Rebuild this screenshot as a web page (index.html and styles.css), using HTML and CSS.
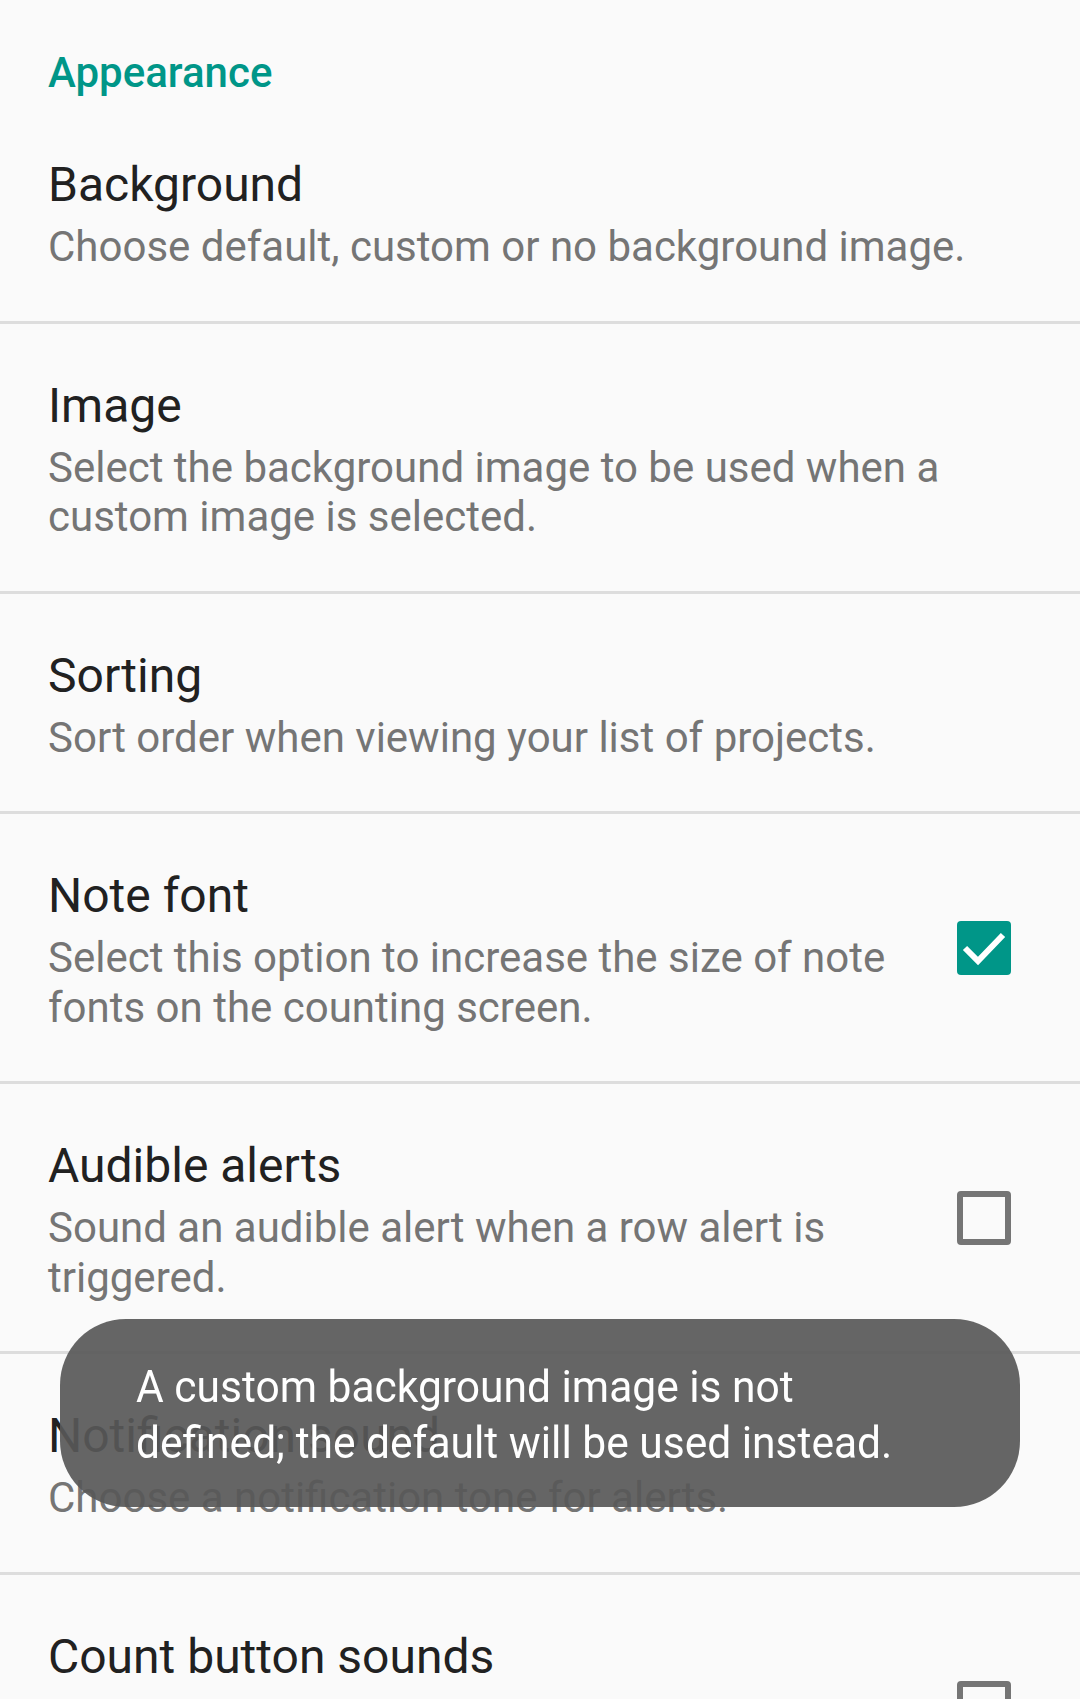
FILE: index.html
```html
<!DOCTYPE html>
<html lang="en">
<head>
<meta charset="utf-8">
<title>Settings</title>
<link rel="stylesheet" href="styles.css">
</head>
<body>
<main class="prefs">
  <div class="category">Appearance</div>

  <div class="pref">
    <div class="pref-text">
      <div class="pref-title">Background</div>
      <div class="pref-summary">Choose default, custom or no background image.</div>
    </div>
  </div>

  <div class="pref">
    <div class="pref-text">
      <div class="pref-title">Image</div>
      <div class="pref-summary">Select the background image to be used when a custom image is selected.</div>
    </div>
  </div>

  <div class="pref">
    <div class="pref-text">
      <div class="pref-title">Sorting</div>
      <div class="pref-summary">Sort order when viewing your list of projects.</div>
    </div>
  </div>

  <div class="pref">
    <div class="pref-text">
      <div class="pref-title">Note font</div>
      <div class="pref-summary">Select this option to increase the size of note fonts on the counting screen.</div>
    </div>
    <div class="pref-widget">
      <span class="checkbox checked">
        <svg viewBox="0 0 54 54" width="54" height="54"><polyline points="8,27 21,40 46,14" fill="none" stroke="#ffffff" stroke-width="6"/></svg>
      </span>
    </div>
  </div>

  <div class="pref">
    <div class="pref-text">
      <div class="pref-title">Audible alerts</div>
      <div class="pref-summary">Sound an audible alert when a row alert is triggered.</div>
    </div>
    <div class="pref-widget"><span class="checkbox"></span></div>
  </div>

  <div class="pref">
    <div class="pref-text">
      <div class="pref-title">Notification sound</div>
      <div class="pref-summary">Choose a notification tone for alerts.</div>
    </div>
  </div>

  <div class="pref">
    <div class="pref-text">
      <div class="pref-title">Count button sounds</div>
      <div class="pref-summary">Play a sound when the increase or decrease count buttons are pressed.</div>
    </div>
    <div class="pref-widget"><span class="checkbox"></span></div>
  </div>
</main>

<div class="toast">
  <p class="toast-text">A custom background image is not<br>defined; the default will be used instead.</p>
</div>
</body>
</html>
```

FILE: styles.css
```css
html, body {
  margin: 0;
  padding: 0;
  background: #fafafa;
}

body {
  font-family: Roboto, "Noto Sans", sans-serif;
  overflow: hidden;
}

.prefs {
  display: flex;
  flex-direction: column;
}

.category {
  padding: 48px 48px 6px;
  font-size: 42px;
  line-height: 49px;
  font-weight: 500;
  color: #009688;
}

.pref {
  display: flex;
  align-items: center;
  padding: 0 48px;
  border-bottom: 3px solid #dddddd;
}

.pref-text {
  flex: 1;
  min-width: 0;
  padding: 54px 0 49px;
}

.pref-title {
  font-size: 48px;
  line-height: 56px;
  color: #212121;
}

.pref-summary {
  margin-top: 9px;
  font-size: 42px;
  line-height: 49.5px;
  color: #757575;
}

.pref-widget {
  flex: none;
  display: flex;
  margin-left: 40px;
  margin-right: 21px;
}

.checkbox {
  display: block;
  width: 54px;
  height: 54px;
  box-sizing: border-box;
  border: 6px solid #757575;
  border-radius: 4px;
}

.checkbox.checked {
  border: none;
  background: #009688;
}

.checkbox svg {
  display: block;
}

.toast {
  position: fixed;
  left: 60px;
  top: 1319px;
  width: 960px;
  height: 188px;
  box-sizing: border-box;
  padding: 40px 0 0 76px;
  border-radius: 66px;
  background: rgba(88, 88, 88, 0.92);
}

.toast-text {
  margin: 0;
  font-size: 45px;
  line-height: 56px;
  color: #ffffff;
  white-space: nowrap;
  transform: scaleX(0.945);
  transform-origin: left top;
}
```
